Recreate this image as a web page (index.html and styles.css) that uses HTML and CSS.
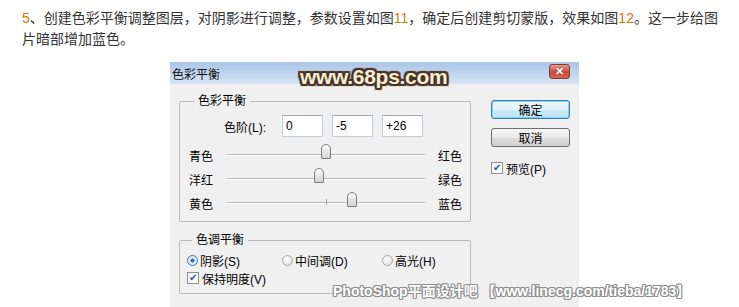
FILE: index.html
```html
<!DOCTYPE html>
<html lang="zh-CN">
<head>
  <meta charset="UTF-8" />
  <meta name="viewport" content="width=device-width, initial-scale=1.0"/>
  <title>色彩平衡</title>
  <link rel="stylesheet" href="styles.css">
</head>
<body>
  <div class="article">
    <p><span class="num">5</span>、创建色彩平衡调整图层，对阴影进行调整，参数设置如图<span class="num">11</span>，确定后创建剪切蒙版，效果如图<span class="num">12</span>。这一步给图<br>片暗部增加蓝色。</p>
  </div>

  <div class="dialog">
    <div class="titlebar">
      <span class="title">色彩平衡</span>
      <span class="close">✕</span>
      <span class="logo-mark">www.68ps.com</span>
    </div>

    <div class="dialog-body">
      <div class="left-col">
        <fieldset class="group">
          <legend>色彩平衡</legend>
          <div class="levels">
            <span class="levels-label">色阶(L):</span>
            <span class="field">0</span>
            <span class="field">-5</span>
            <span class="field">+26</span>
          </div>
          <div class="slider-row">
            <span class="side">青色</span>
            <div class="track"><span class="thumb" style="left: 50%"></span></div>
            <span class="side">红色</span>
          </div>
          <div class="slider-row">
            <span class="side">洋红</span>
            <div class="track"><span class="thumb" style="left: 46.5%"></span></div>
            <span class="side">绿色</span>
          </div>
          <div class="slider-row">
            <span class="side">黄色</span>
            <div class="track"><span class="tick"></span><span class="thumb" style="left: 63%"></span></div>
            <span class="side">蓝色</span>
          </div>
        </fieldset>

        <fieldset class="group tone">
          <legend>色调平衡</legend>
          <div class="radios">
            <label class="radio-item"><span class="radio checked"></span>阴影(S)</label>
            <label class="radio-item wide"><span class="radio"></span>中间调(D)</label>
            <label class="radio-item"><span class="radio"></span>高光(H)</label>
          </div>
          <label class="check-item"><span class="checkbox">✔</span>保持明度(V)</label>
        </fieldset>
      </div>

      <div class="right-col">
        <button class="btn default">确定</button>
        <button class="btn">取消</button>
        <label class="check-item preview"><span class="checkbox">✔</span>预览(P)</label>
      </div>
    </div>
  </div>

  <div class="site-mark">PhotoShop平面设计吧 【www.linecg.com/tieba/1783】</div>
</body>
</html>
```

FILE: styles.css
```css
html, body {
  height: 100%;
  overflow: hidden;
}

body {
  margin: 0;
  background: #fff;
  font-family: "Liberation Sans", "Noto Sans CJK SC", sans-serif;
  color: #000;
  position: relative;
}

.article p {
  margin: 0;
  padding: 8px 8px 0 22px;
  font-size: 14px;
  line-height: 21px;
  color: #333;
}

.num {
  color: #d27b00;
}

.dialog {
  margin: 12px 0 0 170px;
  width: 409px;
  font-size: 12px;
}

.titlebar {
  height: 22px;
  position: relative;
  background: linear-gradient(to bottom, #a9c5e7, #d6e4f4);
  display: flex;
  align-items: center;
  justify-content: space-between;
  padding: 0 9px 0 2px;
}

.title {
  font-size: 12px;
  color: #111;
}

.close {
  width: 21px;
  height: 15px;
  margin-top: -3px;
  box-sizing: border-box;
  border: 1px solid #8c3a30;
  border-radius: 3px;
  background: linear-gradient(to bottom, #e49a8d, #c8473a 55%, #d26a56);
  color: #fff;
  font-size: 11px;
  font-weight: bold;
  line-height: 13px;
  text-align: center;
  text-shadow: 0 0 1px #5a1a12;
}

.logo-mark {
  position: absolute;
  left: 130px;
  top: 3px;
  font-family: "Liberation Sans", sans-serif;
  font-size: 21px;
  font-weight: bold;
  letter-spacing: -0.3px;
  color: #f6eed8;
  text-shadow:
    2px 0 0 #4b3322, -2px 0 0 #4b3322, 0 2px 0 #4b3322, 0 -2px 0 #4b3322,
    1px 1px 0 #4b3322, -1px -1px 0 #4b3322, 1px -1px 0 #4b3322, -1px 1px 0 #4b3322,
    2px 2px 1px #4b3322, -2px -2px 1px #4b3322, 2px -2px 1px #4b3322, -2px 2px 1px #4b3322;
}

.dialog-body {
  background: #f0f0f0;
  height: 223px;
  display: flex;
  gap: 20px;
  padding: 10px 9px 0 9px;
  box-sizing: border-box;
}

.left-col {
  width: 292px;
  display: flex;
  flex-direction: column;
  gap: 11px;
}

.group {
  margin: 0;
  padding: 0 8px 6px 9px;
  border: 1px solid #b9b9b9;
  border-radius: 2px;
  min-width: 0;
}

.group legend {
  margin-left: 5px;
  padding: 0 4px;
  line-height: 14px;
  font-size: 12px;
}

.levels {
  display: flex;
  align-items: center;
  gap: 9px;
  margin-top: 7px;
  padding-left: 35px;
}

.levels-label {
  width: 51px;
  margin-right: -2px;
}

.field {
  width: 41px;
  height: 22px;
  box-sizing: border-box;
  background: #fff;
  border: 1px solid #c5ccd4;
  border-top-color: #a3a9b0;
  padding-left: 3px;
  line-height: 20px;
}

.levels + .slider-row {
  margin-top: 6px;
}

.slider-row {
  height: 24px;
  display: flex;
  align-items: center;
}

.side {
  width: 38px;
}

.slider-row .side:last-child {
  width: auto;
  margin-left: 13px;
}

.track {
  width: 198px;
  height: 1px;
  background: #b8b8b8;
  border-bottom: 1px solid #fff;
  position: relative;
}

.tick {
  position: absolute;
  left: 99px;
  top: -3px;
  width: 1px;
  height: 6px;
  background: #a0a0a0;
}

.thumb {
  position: absolute;
  top: -10px;
  width: 10px;
  height: 15px;
  margin-left: -5px;
  box-sizing: border-box;
  border: 1px solid #7d7d7d;
  border-radius: 5px 5px 1px 1px;
  background: linear-gradient(to bottom, #fdfdfd, #e6e6e6 50%, #d3d3d3);
}

.tone {
  padding-left: 7px;
  padding-bottom: 7px;
}

.radios {
  display: flex;
  margin-top: 5px;
  height: 16px;
  align-items: center;
}

.radio-item, .check-item {
  display: flex;
  align-items: center;
  gap: 2px;
}

.radio-item {
  flex: none;
  width: 95px;
}

.radio-item.wide {
  width: 100px;
}

.radio {
  flex: none;
  width: 11px;
  height: 11px;
  box-sizing: border-box;
  border-radius: 50%;
  border: 1px solid #a8a8a8;
  background: radial-gradient(circle at 40% 35%, #fdfdfd, #dadada);
}

.radio.checked {
  border-color: #3e74b3;
  background: radial-gradient(circle, #2f7fd6 0, #1b5fb5 28%, #e9f1fa 36%, #d0dff0 100%);
}

.check-item {
  margin-top: 2px;
  height: 16px;
}

.checkbox {
  flex: none;
  width: 12px;
  height: 12px;
  box-sizing: border-box;
  border: 1px solid #8f8f8f;
  background: linear-gradient(to bottom right, #f4f4f4, #fff);
  color: #2a52be;
  font-size: 10px;
  line-height: 10px;
  text-align: center;
  margin-right: 1px;
}

.right-col {
  display: flex;
  flex-direction: column;
  padding-top: 6px;
}

.btn {
  width: 79px;
  height: 19px;
  padding: 0;
  font-family: inherit;
  font-size: 12px;
  color: #000;
  border: 1px solid #707070;
  border-radius: 3px;
  background: linear-gradient(to bottom, #f6f6f6, #ebebeb 50%, #dddddd 51%, #cfcfcf);
}

.btn + .btn {
  margin-top: 9px;
}

.btn.default {
  border-color: #3c7fb1;
  box-shadow: inset 0 0 0 1px #7fd0f5;
  background: linear-gradient(to bottom, #eef8fd, #e0f1fb 50%, #cce9f9 51%, #bfe2f7);
}

.preview {
  margin-top: 13px;
}

.site-mark {
  position: absolute;
  left: 333px;
  top: 283px;
  font-family: "Liberation Sans", "Noto Sans CJK SC", sans-serif;
  font-size: 14px;
  line-height: 17px;
  font-weight: bold;
  color: #fff;
  white-space: nowrap;
  text-shadow:
    1px 0 0 #8d8d8d, -1px 0 0 #8d8d8d, 0 1px 0 #8d8d8d, 0 -1px 0 #8d8d8d,
    1px 1px 0 #9a9a9a, -1px -1px 0 #9a9a9a, 1px -1px 0 #9a9a9a, -1px 1px 0 #9a9a9a;
}
```
